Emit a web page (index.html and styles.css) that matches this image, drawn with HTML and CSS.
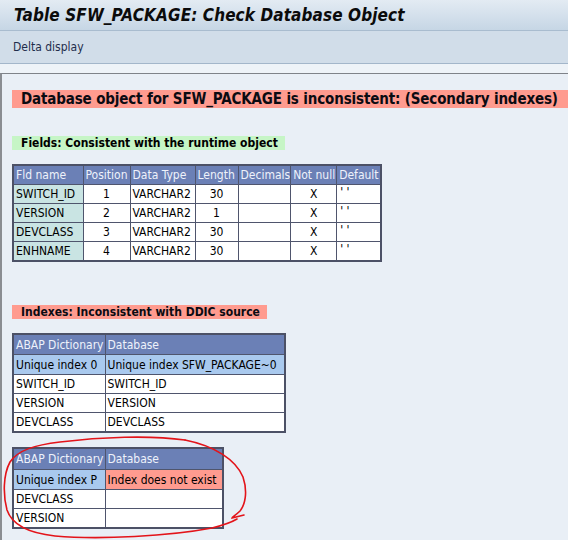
FILE: index.html
```html
<!DOCTYPE html>
<html>
<head>
<meta charset="utf-8">
<link rel="stylesheet" href="styles.css">
</head>
<body>
<div class="screen">
  <div class="titlebar"><span class="title">Table SFW_PACKAGE: Check Database Object</span></div>
  <div class="toolbar"><span class="tool">Delta display</span></div>
  <div class="spacer"></div>
  <div class="content">
    <div class="head-red big">Database object for SFW_PACKAGE is inconsistent: (Secondary indexes)</div>
    <div class="head-green">Fields: Consistent with the runtime object</div>
    <table class="grid fields">
      <colgroup><col style="width:70px"><col style="width:47px"><col style="width:65px"><col style="width:43px"><col style="width:52px"><col style="width:46px"><col style="width:44px"></colgroup>
      <tr class="hdr"><th>Fld name</th><th>Position</th><th>Data Type</th><th>Length</th><th>Decimals</th><th>Not null</th><th>Default</th></tr>
      <tr><td class="key">SWITCH_ID</td><td class="c">1</td><td>VARCHAR2</td><td class="c">30</td><td></td><td class="c">X</td><td class="q">' '</td></tr>
      <tr><td class="key">VERSION</td><td class="c">2</td><td>VARCHAR2</td><td class="c">1</td><td></td><td class="c">X</td><td class="q">' '</td></tr>
      <tr><td class="key">DEVCLASS</td><td class="c">3</td><td>VARCHAR2</td><td class="c">30</td><td></td><td class="c">X</td><td class="q">' '</td></tr>
      <tr><td class="key">ENHNAME</td><td class="c">4</td><td>VARCHAR2</td><td class="c">30</td><td></td><td class="c">X</td><td class="q">' '</td></tr>
    </table>
    <div class="head-red small">Indexes: Inconsistent with DDIC source</div>
    <table class="grid idx1">
      <colgroup><col style="width:92px"><col style="width:180px"></colgroup>
      <tr class="hdr"><th>ABAP Dictionary</th><th>Database</th></tr>
      <tr class="sub"><td>Unique index 0</td><td>Unique index SFW_PACKAGE~0</td></tr>
      <tr><td>SWITCH_ID</td><td>SWITCH_ID</td></tr>
      <tr><td>VERSION</td><td>VERSION</td></tr>
      <tr><td>DEVCLASS</td><td>DEVCLASS</td></tr>
    </table>
    <table class="grid idx2">
      <colgroup><col style="width:92px"><col style="width:118px"></colgroup>
      <tr class="hdr"><th>ABAP Dictionary</th><th>Database</th></tr>
      <tr class="sub"><td>Unique index P</td><td class="missing">Index does not exist</td></tr>
      <tr><td>DEVCLASS</td><td></td></tr>
      <tr><td>VERSION</td><td></td></tr>
    </table>
  </div>
  <svg class="circle" width="568" height="540" viewBox="0 0 568 540">
    <path d="M 185 440 C 150 435, 100 437, 60 442 C 35 445, 18 450, 10 462 C 3 475, 3 495, 7 510 C 12 525, 28 533, 55 536 C 100 540, 170 536, 212 528 C 224 525, 232 522, 237 519" />
    <path d="M 185 440 C 215 446, 236 460, 243 477 C 248 492, 245 505, 240 511 C 236 515, 232 517, 232 518 C 236 517, 240 516, 244 515" />
  </svg>
</div>
</body>
</html>
```
FILE: styles.css
```css
html, body {
  margin: 0;
  padding: 0;
}
body {
  width: 568px;
  height: 540px;
  overflow: hidden;
  background: #e9eff6;
  font-family: "DejaVu Sans Condensed", "DejaVu Sans", sans-serif;
  font-stretch: condensed;
  color: #000;
}
.screen {
  position: relative;
  width: 568px;
  height: 540px;
  overflow: hidden;
}
.titlebar {
  height: 31px;
  border-bottom: 1px solid #a9bccf;
  background: linear-gradient(#e3ebf3, #c6d6e5);
  display: flex;
  align-items: center;
  padding-left: 14px;
  box-sizing: border-box;
}
.title {
  font-weight: bold;
  font-style: italic;
  font-size: 17px;
  color: #0b0b0b;
  letter-spacing: 0.1px;
}
.toolbar {
  height: 32px;
  border-bottom: 1px solid #a3b6ca;
  background: #d1dde9;
  display: flex;
  align-items: center;
  padding-left: 13px;
}
.tool {
  font-size: 12px;
  color: #1f2e4c;
}
.spacer {
  height: 9px;
  background: #eef3f8;
}
.content {
  border-top: 1px solid #7f8389;
  border-left: 2px solid #8a8d92;
  background: #e9eff6;
  padding: 16px 0 0 10px;
  height: 480px;
  box-sizing: border-box;
}
.head-red {
  background: #ff9b8f;
  font-weight: bold;
  color: #0b0b12;
  padding-left: 9px;
}
.head-red.big {
  font-size: 15px;
  height: 18px;
  line-height: 18px;
  letter-spacing: -0.15px;
  margin-right: -40px;
}
.head-red.small {
  width: max-content;
  font-size: 12px;
  height: 14px;
  line-height: 14px;
  padding-right: 7px;
  margin-top: 43px;
}
.head-green {
  width: max-content;
  background: #c6f5c6;
  font-weight: bold;
  font-size: 12px;
  height: 14px;
  line-height: 14px;
  padding: 0 7px 0 9px;
  margin-top: 28px;
}
.grid {
  border-collapse: collapse;
  table-layout: fixed;
  border: 2px solid #4c5166;
  font-size: 12px;
  margin-top: 14px;
}
.grid th, .grid td {
  border: 1px solid #4f556d;
  padding: 0 0 0 2px;
  height: 18px;
  line-height: 18px;
  white-space: nowrap;
  overflow: hidden;
  text-align: left;
  font-weight: normal;
}
.grid td {
  background: #ffffff;
}
.grid .hdr th {
  background: #6b80b6;
  color: #eef2fb;
  height: 18px;
}
.grid td.key {
  background: #c9e4e3;
}
.grid td.c {
  text-align: center;
  padding: 0;
}
.grid td.q {
  vertical-align: top;
  line-height: 14px;
  padding-left: 3px;
}
.grid .sub td {
  background: #a9c9ee;
  height: 19px;
}
.grid .sub td.missing {
  background: #ff9b8f;
}
.idx1 .hdr th { height: 19px; }
.idx2 {
  margin-top: 14px;
}
.idx2 .hdr th { height: 20px; }
.circle {
  position: absolute;
  left: 0;
  top: 0;
  pointer-events: none;
}
.circle path {
  fill: none;
  stroke: #e3141a;
  stroke-width: 1.6;
  stroke-linecap: round;
}
```
